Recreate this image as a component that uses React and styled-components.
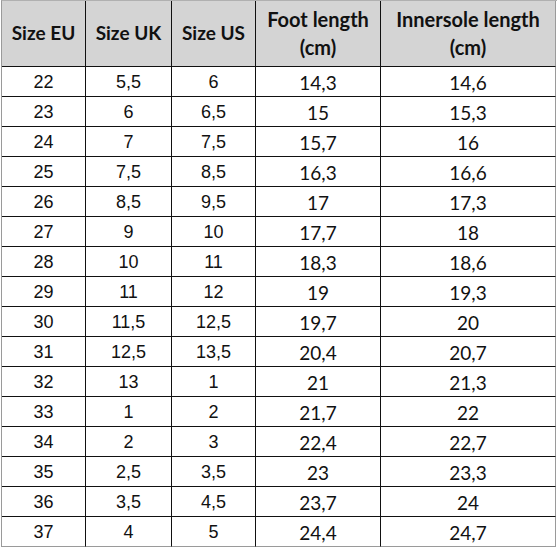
import React from 'react';
import styled, { createGlobalStyle } from 'styled-components';

const GlobalStyle = createGlobalStyle`
  body {
    margin: 0;
    background: #fff;
  }
`;

const Table = styled.div`
  display: grid;
  grid-template-columns: 84px 86px 84px 125px 175px;
  grid-template-rows: 66px repeat(16, 30px);
  width: 555px;
  margin-left: 1px;
  border-left: 1px solid #9a9a9a;
  border-top: 1px solid #b0b0b0;
  box-sizing: content-box;
`;

const HeadCell = styled.div`
  display: flex;
  align-items: center;
  justify-content: center;
  text-align: center;
  background: #d4d4d4;
  border-right: 1px solid ${(p) => (p.$last ? '#9a9a9a' : '#111')};
  border-bottom: 1px solid #111;
  font-family: Lato, 'Liberation Sans', sans-serif;
  font-weight: 700;
  font-size: ${(p) => (p.$wide ? '20px' : '19px')};
  line-height: 28px;
  color: #111;
  padding-bottom: 2px;
`;

const Cell = styled.div`
  display: flex;
  align-items: center;
  justify-content: center;
  border-right: 1px solid ${(p) => (p.$last ? '#9a9a9a' : '#111')};
  border-bottom: 1px solid ${(p) => (p.$bottom ? '#9a9a9a' : '#111')};
  font-family: ${(p) =>
    p.$calibri ? "Lato, 'Liberation Sans', sans-serif" : "'Liberation Sans', Arial, sans-serif"};
  font-size: ${(p) => (p.$calibri ? '19px' : '18px')};
  color: #111;
  padding-top: 1px;
`;

const headers = ['Size EU', 'Size UK', 'Size US', ['Foot length', '(cm)'], ['Innersole length', '(cm)']];

const rows = [
  ['22', '5,5', '6', '14,3', '14,6'],
  ['23', '6', '6,5', '15', '15,3'],
  ['24', '7', '7,5', '15,7', '16'],
  ['25', '7,5', '8,5', '16,3', '16,6'],
  ['26', '8,5', '9,5', '17', '17,3'],
  ['27', '9', '10', '17,7', '18'],
  ['28', '10', '11', '18,3', '18,6'],
  ['29', '11', '12', '19', '19,3'],
  ['30', '11,5', '12,5', '19,7', '20'],
  ['31', '12,5', '13,5', '20,4', '20,7'],
  ['32', '13', '1', '21', '21,3'],
  ['33', '1', '2', '21,7', '22'],
  ['34', '2', '3', '22,4', '22,7'],
  ['35', '2,5', '3,5', '23', '23,3'],
  ['36', '3,5', '4,5', '23,7', '24'],
  ['37', '4', '5', '24,4', '24,7'],
];

export default function App() {
  return (
    <>
      <GlobalStyle />
      <Table>
        {headers.map((h, i) => (
          <HeadCell key={i} $last={i === 4} $wide={Array.isArray(h)}>
            {Array.isArray(h) ? (
              <span>
                {h[0]}
                <br />
                {h[1]}
              </span>
            ) : (
              h
            )}
          </HeadCell>
        ))}
        {rows.map((r, ri) =>
          r.map((v, ci) => (
            <Cell
              key={ri + '-' + ci}
              $last={ci === 4}
              $bottom={ri === rows.length - 1}
              $calibri={ci >= 3}
            >
              {v}
            </Cell>
          ))
        )}
      </Table>
    </>
  );
}
